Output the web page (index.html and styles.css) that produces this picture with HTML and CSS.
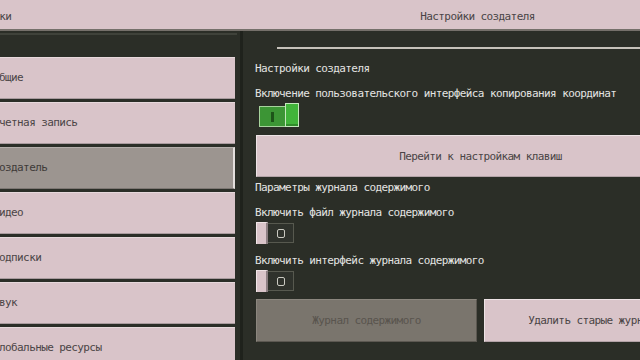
FILE: index.html
```html
<!DOCTYPE html>
<html lang="ru">
<head>
    <meta charset="UTF-8">
    <meta name="viewport" content="width=device-width, initial-scale=1.0">
    <title>Настройки создателя</title>
    <link rel="stylesheet" href="styles.css">
</head>
<body>
    <div class="screen">
        <header class="topbar">
            <div class="topbarLeft">Настройки</div>
            <div class="topbarTitle">Настройки создателя</div>
        </header>
        <div class="main">
            <nav class="sidebar">
                <div class="sidebarTop"></div>
                <ul class="navList">
                    <li>Общие</li>
                    <li>Учетная запись</li>
                    <li class="active">Создатель</li>
                    <li>Видео</li>
                    <li>Подписки</li>
                    <li>Звук</li>
                    <li>Глобальные ресурсы</li>
                </ul>
            </nav>
            <div class="panel">
                <div class="scrollEdge"></div>
                <h2 class="sectionTitle">Настройки создателя</h2>

                <p class="optionLabel">Включение пользовательского интерфейса копирования координат</p>
                <span class="toggle toggleOn">
                    <span class="track"><span class="mark"></span></span>
                    <span class="knob"></span>
                </span>

                <button class="btn btnWide">Перейти к настройкам клавиш</button>

                <p class="groupLabel">Параметры журнала содержимого</p>

                <p class="optionLabel">Включить файл журнала содержимого</p>
                <span class="toggle toggleOff">
                    <span class="knob"></span>
                    <span class="track"><span class="ring"></span></span>
                </span>

                <p class="optionLabel tight">Включить интерфейс журнала содержимого</p>
                <span class="toggle toggleOff">
                    <span class="knob"></span>
                    <span class="track"><span class="ring"></span></span>
                </span>

                <div class="btnRow">
                    <button class="btn btnDisabled">Журнал содержимого</button>
                    <button class="btn">Удалить старые журналы</button>
                </div>
            </div>
        </div>
    </div>
</body>
</html>
```

FILE: styles.css
```css
* {
    padding: 0;
    margin: 0;
    box-sizing: border-box;
    list-style: none;
}

body {
    width: 640px;
    height: 360px;
    overflow: hidden;
    background-color: #2b2e27;
    font-family: "DejaVu Sans Mono", monospace;
    font-size: 11px;
    letter-spacing: -0.6px;
}

/* the ui is wider than the window, left edge sits off screen */
.screen {
    width: 770px;
    height: 360px;
    margin-left: -50px;
    display: flex;
    flex-direction: column;
}

.topbar {
    display: flex;
    height: 31px;
    padding-top: 4px;
    line-height: 25px;
    background-color: #d9c4c9;
    border-bottom: 2px solid #75706a;
    color: #4a4447;
}

.topbarLeft {
    width: 294px;
    padding-left: 7px;
}

.topbarTitle {
    flex: 1;
    text-align: center;
    padding-right: 9px;
}

.main {
    flex: 1;
    display: flex;
}

.sidebar {
    width: 294px;
    padding: 2px 5px 0 0;
    background-color: #2b2e27;
    border-right: 3px solid #1f221c;
}

.sidebarTop {
    height: 2px;
    margin-right: -2px;
    background-color: #3f423a;
}

.navList {
    margin-top: 22px;
}

.navList li {
    height: 42px;
    margin-bottom: 3px;
    padding-left: 43px;
    line-height: 40px;
    color: #4b4446;
    background-color: #d9c4c9;
    border-top: 1px solid #e6d8db;
    border-bottom: 1px solid #a99b9e;
}

.navList li.active {
    background-color: #9c9590;
    border-top-color: #b5afab;
    border-bottom-color: #7d7773;
    border-right: 2px solid #e4dfdd;
    color: #3e3a38;
}

.panel {
    flex: 1;
    display: flex;
    flex-direction: column;
    align-items: flex-start;
    padding: 0 15px 0 12px;
    color: #e4e4e2;
}

.scrollEdge {
    align-self: stretch;
    height: 2px;
    margin: 16px -15px 0 22px;
    background-color: #c6c2ba;
}

.sectionTitle {
    margin-top: 13px;
    font-size: 11px;
    font-weight: normal;
    line-height: 13px;
}

.optionLabel {
    margin-top: 12px;
    line-height: 13px;
    white-space: nowrap;
}

.optionLabel.tight {
    margin-top: 10px;
}

.groupLabel {
    margin-top: 4px;
    line-height: 13px;
}

.toggle {
    display: flex;
    margin-top: 3px;
}

.toggleOn {
    align-items: flex-end;
    margin-left: 4px;
}

.toggleOn .track {
    width: 26px;
    height: 21px;
    display: flex;
    align-items: center;
    justify-content: center;
    background-color: #3c9535;
    border: 1px solid #a7d39d;
    border-right: none;
}

.toggleOn .mark {
    width: 3px;
    height: 10px;
    background-color: #1d5419;
}

.toggleOn .knob {
    width: 14px;
    height: 24px;
    background-color: #41b43a;
    border: 1px solid #c4e8bc;
    box-shadow: inset 0 -2px 0 #2f8c2a;
}

.toggleOff {
    align-items: center;
    margin-left: 1px;
}

.toggleOff .knob {
    width: 12px;
    height: 22px;
    background-color: #d9c4c9;
    border-left: 1px solid #f1e6e8;
    border-top: 1px solid #eee2e4;
    border-right: 2px solid #8c7f82;
}

.toggleOff .track {
    width: 26px;
    height: 20px;
    display: flex;
    align-items: center;
    justify-content: center;
    background-color: #2f322c;
    border: 1px solid #57594f;
    border-left: none;
}

.toggleOff .ring {
    width: 8px;
    height: 9px;
    border: 1px solid #cacac2;
    border-radius: 2px;
}

.btn {
    height: 42px;
    font-family: "DejaVu Sans Mono", monospace;
    font-size: 11px;
    letter-spacing: -0.6px;
    color: #4b4446;
    background-color: #d9c4c9;
    border: 1px solid #b3a3a7;
    border-top-color: #ede3e5;
    border-left-color: #ede3e5;
    white-space: nowrap;
}

.btnWide {
    align-self: stretch;
    margin-top: 8px;
    margin-left: 1px;
}

.btnRow {
    display: flex;
    gap: 7px;
    margin-top: 7px;
    margin-left: 1px;
}

.btnRow .btn {
    width: 221px;
    height: 43px;
}

.btn.btnDisabled {
    color: #59544e;
    background-color: #7a756d;
    border-color: #5c5851;
    border-top-color: #8b867e;
    border-left-color: #8b867e;
}
```
